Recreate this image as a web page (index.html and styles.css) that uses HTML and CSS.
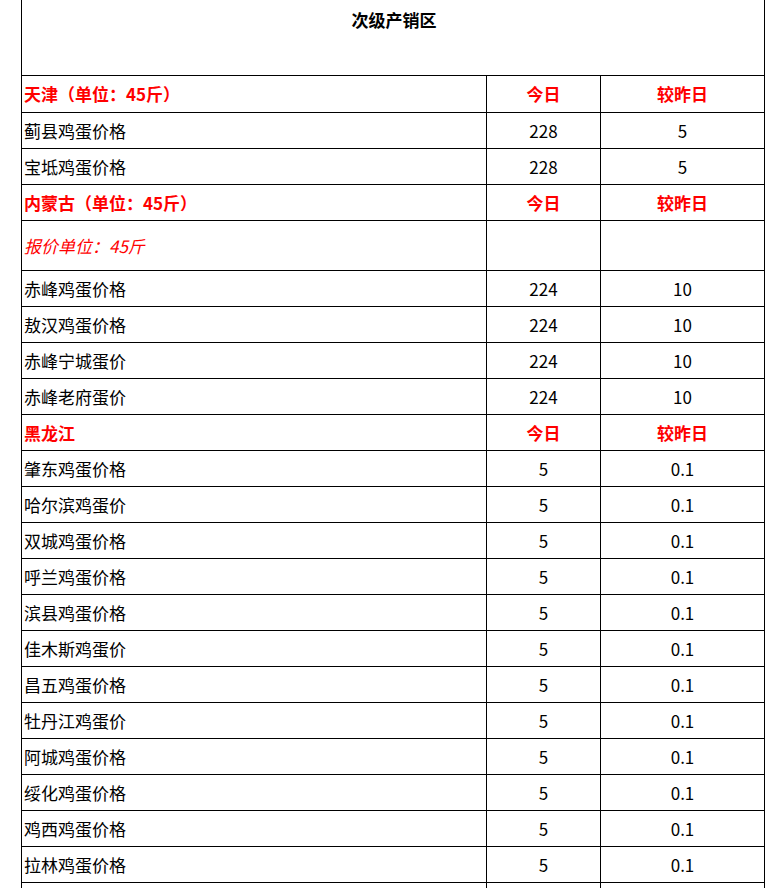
FILE: index.html
```html
<!DOCTYPE html>
<html lang="zh-CN">
<head>
<meta charset="utf-8">
<title>次级产销区</title>
<link rel="stylesheet" href="styles.css">
</head>
<body>
<table class="price-table">
  <colgroup>
    <col class="c-name">
    <col class="c-today">
    <col class="c-diff">
  </colgroup>
  <tbody>
    <tr class="title-row"><td colspan="3" class="title">次级产销区</td></tr>
    <tr class="head first-head"><td class="name">天津（单位：45斤）</td><td class="num">今日</td><td class="num">较昨日</td></tr>
    <tr><td class="name">蓟县鸡蛋价格</td><td class="num">228</td><td class="num">5</td></tr>
    <tr><td class="name">宝坻鸡蛋价格</td><td class="num">228</td><td class="num">5</td></tr>
    <tr class="head"><td class="name">内蒙古（单位：45斤）</td><td class="num">今日</td><td class="num">较昨日</td></tr>
    <tr class="note-row"><td class="name note">报价单位：45斤</td><td class="num"></td><td class="num"></td></tr>
    <tr><td class="name">赤峰鸡蛋价格</td><td class="num">224</td><td class="num">10</td></tr>
    <tr><td class="name">敖汉鸡蛋价格</td><td class="num">224</td><td class="num">10</td></tr>
    <tr><td class="name">赤峰宁城蛋价</td><td class="num">224</td><td class="num">10</td></tr>
    <tr><td class="name">赤峰老府蛋价</td><td class="num">224</td><td class="num">10</td></tr>
    <tr class="head"><td class="name">黑龙江</td><td class="num">今日</td><td class="num">较昨日</td></tr>
    <tr><td class="name">肇东鸡蛋价格</td><td class="num">5</td><td class="num">0.1</td></tr>
    <tr><td class="name">哈尔滨鸡蛋价</td><td class="num">5</td><td class="num">0.1</td></tr>
    <tr><td class="name">双城鸡蛋价格</td><td class="num">5</td><td class="num">0.1</td></tr>
    <tr><td class="name">呼兰鸡蛋价格</td><td class="num">5</td><td class="num">0.1</td></tr>
    <tr><td class="name">滨县鸡蛋价格</td><td class="num">5</td><td class="num">0.1</td></tr>
    <tr><td class="name">佳木斯鸡蛋价</td><td class="num">5</td><td class="num">0.1</td></tr>
    <tr><td class="name">昌五鸡蛋价格</td><td class="num">5</td><td class="num">0.1</td></tr>
    <tr><td class="name">牡丹江鸡蛋价</td><td class="num">5</td><td class="num">0.1</td></tr>
    <tr><td class="name">阿城鸡蛋价格</td><td class="num">5</td><td class="num">0.1</td></tr>
    <tr><td class="name">绥化鸡蛋价格</td><td class="num">5</td><td class="num">0.1</td></tr>
    <tr><td class="name">鸡西鸡蛋价格</td><td class="num">5</td><td class="num">0.1</td></tr>
    <tr><td class="name">拉林鸡蛋价格</td><td class="num">5</td><td class="num">0.1</td></tr>
    <tr><td class="name"></td><td class="num"></td><td class="num"></td></tr>
  </tbody>
</table>
</body>
</html>
```

FILE: styles.css
```css
html, body {
  margin: 0;
  padding: 0;
  background: #fff;
}

body {
  font-family: "Noto Sans CJK SC", "Noto Sans", sans-serif;
  font-size: 17px;
  color: #000;
}

.price-table {
  margin-left: 21px;
  border-collapse: separate;
  border-spacing: 0;
  table-layout: fixed;
  width: 744px;
  border-left: 1px solid #000;
}

.c-name { width: 465px; }
.c-today { width: 114px; }
.c-diff { width: 164px; }

.price-table td {
  box-sizing: border-box;
  height: 36px;
  padding: 0 0 0 2px;
  border-right: 1px solid #000;
  border-bottom: 1px solid #000;
  line-height: 20px;
  vertical-align: middle;
  white-space: nowrap;
  overflow: hidden;
}

.price-table td.num {
  text-align: center;
  padding: 0;
}

.price-table .title-row td {
  height: 76px;
  vertical-align: top;
  text-align: center;
  font-weight: 700;
  padding-top: 10px;
}

.price-table .first-head td {
  height: 37px;
}

.head td {
  color: #f00;
  font-weight: 700;
}

.note-row td {
  height: 50px;
}

.note {
  color: #f00;
  font-style: italic;
}
```
